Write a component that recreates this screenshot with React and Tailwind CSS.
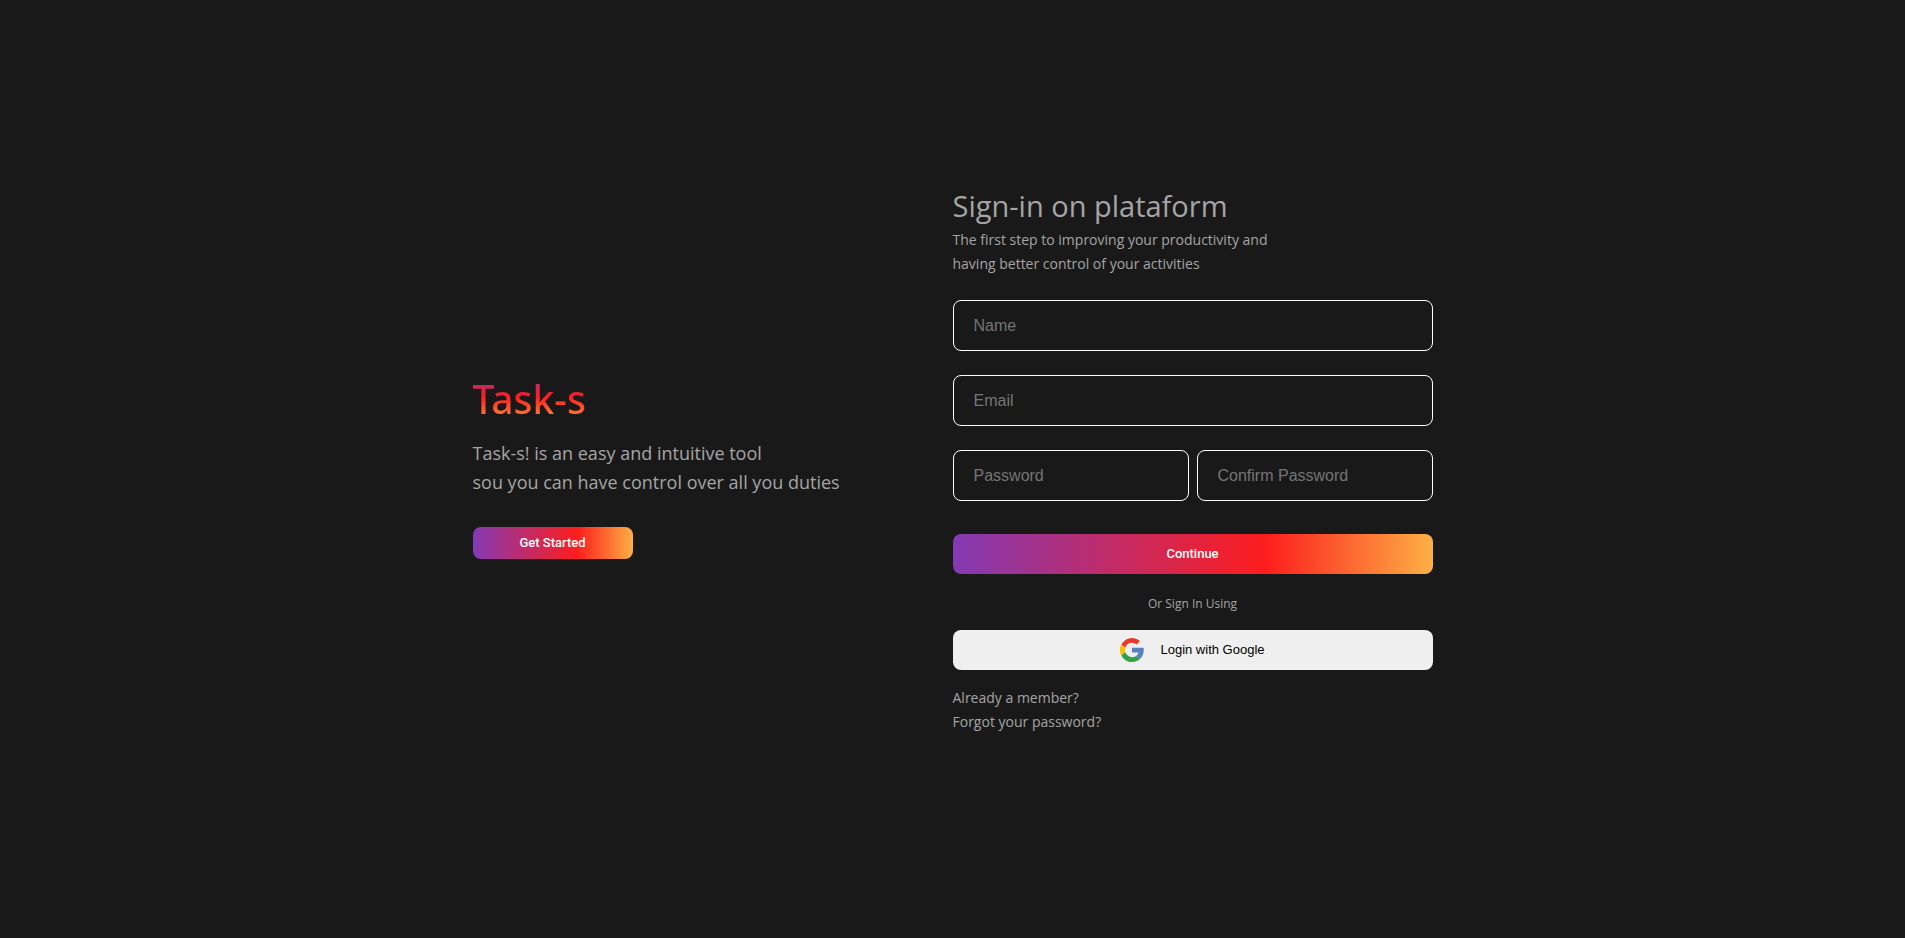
function GoogleIcon() {
  return (
    <svg viewBox="0 0 24 24" className="size-6" aria-hidden="true">
      <path fill="#e63a2d" d="M12 4.8c1.8 0 3.4.7 4.6 1.8l3.4-3.5A12 12 0 0 0 1.3 6.6l4 3.1A7.1 7.1 0 0 1 12 4.8z" />
      <path fill="#fbbd00" d="M4.9 12c0-.8.1-1.6.4-2.3l-4-3.1a12 12 0 0 0 0 10.8l4-3.1A7 7 0 0 1 4.9 12z" />
      <path fill="#31a146" d="M12 24c3 0 5.900-1.100 8-3l-3.900-3A7.200 7.200 0 0 1 5.300 14.300l-4 3.100A12 12 0 0 0 12 24z" />
      <path fill="#5a7fc0" d="M23.600 9.800H12v4.800h6.500a5.600 5.600 0 0 1-2.400 3.400l3.900 3c2.600-2.400 4.300-6.200 3.600-11.200z" />
    </svg>
  );
}

function Field({ name, label, type = "text" }) {
  return (
    <input
      name={name}
      type={type}
      aria-label={label}
      placeholder={label}
      className="h-[51px] w-full min-w-0 flex-none rounded-lg border border-white bg-transparent px-5 font-['Liberation_Sans',sans-serif] text-base text-white placeholder:text-[#757575]"
    />
  );
}

export default function App() {
  return (
    <main className="flex min-h-screen items-center justify-center bg-[#191919] font-['Open_Sans',sans-serif] text-[#a5a5a5]">
      <div className="grid w-full max-w-[960px] grid-cols-2 items-center pb-5">
        <section className="flex flex-col items-start pt-3">
          <h1 className="bg-[linear-gradient(180deg,#833ab4_0%,#fd1d1d_46%,#fcb045_100%)] bg-clip-text font-['Noto_Sans',sans-serif] text-[39px] leading-[56px] font-medium text-transparent">
            Task-s
          </h1>
          <p className="mt-3 text-lg leading-[29px]">
            Task-s! is an easy and intuitive tool
            <br />
            sou you can have control over all you duties
          </p>
          <button
            type="button"
            className="mt-[30px] h-8 w-40 rounded-lg bg-[linear-gradient(90deg,#833ab4_0%,#fd1d1d_65%,#fcb045_100%)] font-[Roboto,sans-serif] text-[13px] font-medium text-white"
          >
            Get Started
          </button>
        </section>

        <section>
          <h2 className="text-[29px] leading-[44px]">Sign-in on plataform</h2>
          <p className="text-sm leading-6">
            The first step to improving your productivity and
            <br />
            having better control of your activities
          </p>
          <form className="mt-6" onSubmit={(e) => e.preventDefault()}>
            <div className="flex flex-col gap-6">
              <Field name="name" label="Name" />
              <Field name="email" label="Email" type="email" />
              <div className="grid grid-cols-2 gap-2">
                <Field name="password" label="Password" type="password" />
                <Field name="confirm" label="Confirm Password" type="password" />
              </div>
            </div>
            <button
              type="submit"
              className="mt-[33px] h-10 w-full rounded-lg bg-[linear-gradient(90deg,#833ab4_0%,#fd1d1d_65%,#fcb045_100%)] font-[Roboto,sans-serif] text-[13px] font-medium text-white"
            >
              Continue
            </button>
            <p className="mt-[18px] mb-[14px] text-center text-xs leading-6">Or Sign In Using</p>
            <button
              type="button"
              className="flex h-10 w-full items-center justify-center gap-4 rounded-lg bg-[#efefef] font-['Liberation_Sans',sans-serif] text-[13px] text-black"
            >
              <GoogleIcon />
              Login with Google
            </button>
          </form>
          <nav className="mt-4 flex flex-col items-start text-sm leading-6">
            <a href="#login">Already a member?</a>
            <a href="#reset">Forgot your password?</a>
          </nav>
        </section>
      </div>
    </main>
  );
}
